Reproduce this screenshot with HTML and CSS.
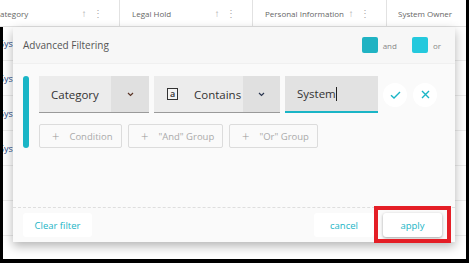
FILE: index.html
```html
<!DOCTYPE html>
<html lang="en">
<head>
  <meta charset="UTF-8" />
  <title>Advanced Filtering</title>
  <link rel="stylesheet" href="styles.css">
</head>
<body>

<div class="screen">

  <!-- Grid behind the dialog -->
  <div class="grid-head">
    <div class="col col-1"><span class="col-title clip">Category</span><span class="col-icons">&#8593; &#8942;</span></div>
    <div class="col col-2"><span class="col-title">Legal Hold</span><span class="col-icons">&#8593; &#8942;</span></div>
    <div class="col col-3"><span class="col-title">Personal Information</span><span class="col-icons">&#8593; &#8942;</span></div>
    <div class="col col-4"><span class="col-title">System Owner</span></div>
  </div>
  <div class="grid-body">
    <div class="grid-row"><span class="clip">System</span></div>
    <div class="grid-row"><span class="clip">System</span></div>
    <div class="grid-row"><span class="clip">System</span></div>
    <div class="grid-row"><span class="clip">System</span></div>
    <div class="grid-row"></div>
    <div class="grid-row"></div>
  </div>

  <!-- Dialog -->
  <div class="dialog">
    <div class="dialog-head">
      <span class="dialog-title">Advanced Filtering</span>
      <div class="legend">
        <span class="swatch swatch-and"></span><span class="legend-label">and</span>
        <span class="swatch swatch-or"></span><span class="legend-label">or</span>
      </div>
    </div>

    <div class="dialog-body">
      <div class="group">
        <div class="group-bar"></div>
        <div class="group-content">
          <div class="condition">
            <div class="select select-field">
              <span class="select-label">Category</span>
              <span class="select-arrow">
                <svg width="7" height="5" viewBox="0 0 7 5"><path d="M1 1l2.5 2.5 2.5-2.5" fill="none" stroke="#5a3426" stroke-width="1.2"/></svg>
              </span>
            </div>
            <div class="select select-op">
              <span class="select-label">
                <span class="type-icon">a</span>
                Contains
              </span>
              <span class="select-arrow">
                <svg width="7" height="5" viewBox="0 0 7 5"><path d="M1 1l2.5 2.5 2.5-2.5" fill="none" stroke="#2a3650" stroke-width="1.2"/></svg>
              </span>
            </div>
            <div class="value-input">System<span class="caret"></span></div>
            <button class="round-btn">
              <svg width="11" height="8" viewBox="0 0 11 8"><path d="M1 4.2l3 2.8 6-6" fill="none" stroke="#1ab5c6" stroke-width="1.4"/></svg>
            </button>
            <button class="round-btn">
              <svg width="9" height="9" viewBox="0 0 9 9"><path d="M1 1l7 7M8 1l-7 7" fill="none" stroke="#1ab5c6" stroke-width="1.4"/></svg>
            </button>
          </div>
          <div class="add-row">
            <button class="add-btn add-condition"><span class="plus">+</span>Condition</button>
            <button class="add-btn add-and"><span class="plus">+</span>"And" Group</button>
            <button class="add-btn add-or"><span class="plus">+</span>"Or" Group</button>
          </div>
        </div>
      </div>
    </div>

    <div class="dialog-foot">
      <button class="text-btn clear-btn">Clear filter</button>
      <div class="foot-right">
        <button class="text-btn cancel-btn">cancel</button>
        <button class="text-btn apply-btn">apply</button>
      </div>
    </div>
  </div>

  <!-- Annotation highlight -->
  <div class="highlight"></div>
</div>

</body>
</html>
```

FILE: styles.css
```css
body {
  margin: 0;
  background-color: #000;
  font-family: 'Open Sans', sans-serif;
}

.screen {
  position: relative;
  width: 466px;
  height: 259px;
  background-color: #fff;
  overflow: hidden;
}

/* Grid behind */
.grid-head {
  display: flex;
  height: 26px;
  border-bottom: 1px solid #e2e2e2;
  font-size: 8px;
  color: #666;
}

.col {
  display: flex;
  align-items: center;
  justify-content: space-between;
  box-sizing: border-box;
  border-right: 1px solid #e2e2e2;
  padding: 0 14px 0 12px;
  overflow: hidden;
  white-space: nowrap;
}

.col-1 { width: 120px; padding-left: 0; }
.col-2 { width: 133px; }
.col-3 { width: 134px; }
.col-4 { width: 79px; border-right: none; padding-left: 11px; }

.col-title.clip {
  margin-left: -5px;
}

.col-icons {
  color: #aaa;
  font-size: 10px;
  letter-spacing: 2px;
}

.grid-body {
  height: 232px;
  border-left: 3px solid #000;
}

.grid-row {
  height: 34px;
  border-bottom: 1px solid #ececec;
  display: flex;
  align-items: center;
  font-size: 9px;
  color: #2a4a8a;
  overflow: hidden;
  white-space: nowrap;
}

.grid-row:first-child {
  height: 33px;
}

.grid-row .clip {
  margin-left: -4px;
}

/* Dialog */
.dialog {
  position: absolute;
  left: 13px;
  top: 27px;
  width: 442px;
  height: 215px;
  background-color: #fafafa;
  box-shadow: 0 4px 10px rgba(0,0,0,0.3);
  display: flex;
  flex-direction: column;
}

.dialog-head {
  height: 37px;
  display: flex;
  align-items: center;
  justify-content: space-between;
  padding: 0 14px 0 10px;
  background-color: #f7f7f7;
  border-bottom: 1px solid #f0f0f0;
  box-sizing: border-box;
}

.dialog-title {
  font-size: 10px;
  color: #555;
}

.legend {
  display: flex;
  align-items: center;
}

.swatch {
  width: 16px;
  height: 16px;
  border-radius: 2px;
}

.swatch-and { background-color: #20b3c3; }
.swatch-or { background-color: #24c9dd; margin-left: 15px; }

.legend-label {
  font-size: 8px;
  color: #888;
  margin-left: 5px;
}

.dialog-body {
  flex: 1;
  padding: 12px 0 0 10px;
}

.group {
  display: flex;
}

.group-bar {
  width: 6px;
  height: 72px;
  border-radius: 3px;
  background-color: #1ab5c6;
  margin-right: 10px;
}

.condition {
  display: flex;
  align-items: center;
  height: 37px;
}

.select {
  display: flex;
  height: 37px;
  box-sizing: border-box;
  border-bottom: 1px solid #9a9a9a;
  margin-right: 5px;
  font-size: 11.5px;
  color: #333;
}

.select-label {
  display: flex;
  align-items: center;
  background-color: #ececec;
  padding-left: 12px;
  box-sizing: border-box;
}

.select-arrow {
  display: flex;
  align-items: center;
  justify-content: center;
  background-color: #e0e0e0;
}

.select-field .select-label { width: 72px; }
.select-field .select-arrow { width: 38px; }
.select-op .select-label { width: 89px; padding-left: 13px; }
.select-op .select-arrow { width: 37px; }

.type-icon {
  display: inline-flex;
  align-items: center;
  justify-content: center;
  width: 9px;
  height: 9px;
  border: 1px solid #333;
  background-color: #f4f4f4;
  font-size: 9px;
  font-weight: 600;
  line-height: 1;
  margin-right: 16px;
  padding-bottom: 1px;
  box-sizing: content-box;
}

.value-input {
  display: flex;
  align-items: center;
  width: 93px;
  height: 37px;
  box-sizing: border-box;
  padding-left: 12px;
  background-color: #e2e2e2;
  border-bottom: 2px solid #1ab5c6;
  font-size: 11.5px;
  color: #333;
}

.caret {
  display: inline-block;
  width: 1px;
  height: 14px;
  background-color: #222;
}

.round-btn {
  width: 24px;
  height: 24px;
  border-radius: 50%;
  border: none;
  background-color: #fff;
  padding: 0;
  margin-left: 5px;
  display: flex;
  align-items: center;
  justify-content: center;
}

.round-btn + .round-btn {
  margin-left: 6px;
}

.add-row {
  display: flex;
  margin-top: 11px;
}

.add-btn {
  height: 24px;
  box-sizing: border-box;
  border: 1px solid #dcdcdc;
  border-radius: 2px;
  background-color: #fafafa;
  font-family: 'Open Sans', sans-serif;
  font-size: 9.5px;
  color: #aaa;
  padding: 0 0 0 12px;
  margin-right: 6px;
  text-align: left;
  display: flex;
  align-items: center;
}

.add-condition { width: 83px; }
.add-and { width: 95px; }
.add-or { width: 89px; }

.plus {
  font-size: 13px;
  font-weight: 300;
  margin-right: 10px;
  line-height: 1;
  color: #999;
}

.dialog-foot {
  display: flex;
  justify-content: space-between;
  align-items: center;
  border-top: 1px dashed #dedede;
  padding: 5px 13px 5px 10px;
}

.foot-right {
  display: flex;
}

.text-btn {
  height: 24px;
  border: none;
  border-radius: 3px;
  background-color: #fff;
  font-family: 'Open Sans', sans-serif;
  font-size: 9.5px;
  color: #1ab5c6;
  padding: 0;
}

.clear-btn { width: 69px; }
.cancel-btn { width: 60px; margin-right: 9px; }
.apply-btn {
  width: 59px;
  box-shadow: 0 1px 3px rgba(0,0,0,0.35);
}

.highlight {
  position: absolute;
  left: 374px;
  top: 206px;
  width: 77px;
  height: 37px;
  box-sizing: border-box;
  border: 4px solid #e41e26;
}
```
